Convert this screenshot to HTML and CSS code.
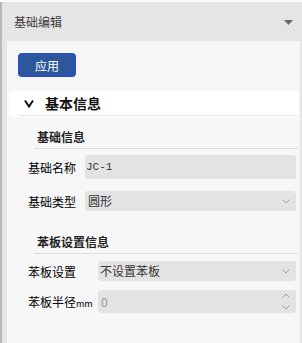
FILE: index.html
```html
<!DOCTYPE html>
<html lang="zh-CN">
<head>
    <meta charset="UTF-8">
    <meta name="viewport" content="width=device-width, initial-scale=1.0">
    <title>基础编辑</title>
    <link rel="stylesheet" href="styles.css">
</head>
<body>
    <div class="panel">
        <div class="panel-head">
            <span class="panel-title">基础编辑</span>
            <svg class="collapse" width="9" height="5" viewBox="0 0 9 5"><path d="M0 0H9L4.5 5Z" fill="#6a6a6a"/></svg>
        </div>
        <div class="panel-body">
            <button class="btn-apply">应用</button>
            <div class="sec-head">
                <div class="sec-inner">
                    <svg class="chev" width="10" height="9" viewBox="0 0 10 9"><path d="M1 1.5L5 7.5L9 1.5" fill="none" stroke="#111" stroke-width="2"/></svg>
                    <span>基本信息</span>
                </div>
            </div>

            <div class="group-title">基础信息</div>
            <div class="form-grid first">
                <label>基础名称</label>
                <div class="field tall mono">JC-1</div>
                <label>基础类型</label>
                <div class="field select">
                    <span>圆形</span>
                    <svg width="8" height="5" viewBox="0 0 8 5"><path d="M0.5 0.5L4 4L7.5 0.5" fill="none" stroke="#a0a0a0" stroke-width="1"/></svg>
                </div>
            </div>

            <div class="group-title second">苯板设置信息</div>
            <div class="form-grid second">
                <label>苯板设置</label>
                <div class="field select">
                    <span>不设置苯板</span>
                    <svg width="8" height="5" viewBox="0 0 8 5"><path d="M0.5 0.5L4 4L7.5 0.5" fill="none" stroke="#a0a0a0" stroke-width="1"/></svg>
                </div>
                <label>苯板半径<small>mm</small></label>
                <div class="field number">
                    <span>0</span>
                    <div class="spin">
                        <svg width="8" height="5" viewBox="0 0 8 5"><path d="M0.5 4.5L4 1L7.5 4.5" fill="none" stroke="#a0a0a0" stroke-width="1"/></svg>
                        <svg width="8" height="5" viewBox="0 0 8 5"><path d="M0.5 0.5L4 4L7.5 0.5" fill="none" stroke="#a0a0a0" stroke-width="1"/></svg>
                    </div>
                </div>
            </div>
        </div>
    </div>
</body>
</html>
```

FILE: styles.css
```css
body {
    margin: 0;
    font-family: "Noto Sans CJK SC", sans-serif;
    background: #fbfbfd;
}
.panel {
    margin-top: 2px;
    height: 341px;
    border-left: 2px solid #b9b9b9;
    background: #e5e5e5;
    display: flex;
    flex-direction: column;
}
.panel-head {
    height: 39px;
    display: flex;
    align-items: center;
    justify-content: space-between;
    padding: 0 9px 0 12px;
    font-size: 12px;
    color: #3c3c3c;
}
.collapse {
    margin-top: 2px;
}
.panel-body {
    flex: 1;
    margin: 0 2px 0 5px;
    background: #f7f7f7;
    padding-top: 12px;
}
.btn-apply {
    display: block;
    margin-left: 11px;
    width: 58px;
    height: 24px;
    padding: 0;
    border: 2px solid #2b50c2;
    border-radius: 4px;
    background: #2c579b;
    color: #fff;
    font-family: inherit;
    font-size: 12px;
}
.sec-head {
    margin: 14px 1px 0 2px;
    background: #fff;
    padding-bottom: 1px;
}
.sec-inner {
    height: 24px;
    margin: 0 1px 0 10px;
    border-bottom: 1px solid #e4e4e4;
    display: flex;
    align-items: center;
    font-size: 14px;
    font-weight: bold;
    color: #111;
}
.chev {
    margin: 1px 0 0 5px;
}
.sec-inner span {
    margin-left: 11px;
}
.group-title {
    margin: 12px 2px 0 27px;
    padding: 0 0 3px 3px;
    border-bottom: 1px solid #dedede;
    font-size: 12px;
    line-height: 16px;
    font-weight: bold;
    color: #222;
}
.group-title.second {
    margin-top: 23px;
}
.form-grid {
    display: grid;
    grid-template-columns: auto 1fr;
    align-items: center;
    column-gap: 9px;
    padding: 0 4px 0 21px;
    font-size: 12px;
}
.form-grid.first {
    margin-top: 6px;
    row-gap: 12px;
}
.form-grid.second {
    margin-top: 7px;
    row-gap: 9px;
    grid-template-columns: 61px 1fr;
    column-gap: 9px;
}
label {
    color: #000;
    white-space: nowrap;
}
label small {
    font-size: 9px;
}
.field {
    height: 20px;
    background: #e3e3e3;
    border-radius: 3px;
    display: flex;
    align-items: center;
    justify-content: space-between;
    padding: 0 6px 0 3px;
    color: #333;
}
.field.tall {
    height: 24px;
    padding-left: 1px;
}
.field.mono {
    font-family: "Liberation Mono", monospace;
    font-size: 11px;
}
.field.select span {
    margin-top: -1px;
}
.form-grid.second .field.select {
    padding-left: 2px;
}
.field.number {
    height: 23px;
    color: #999;
}
.spin {
    display: flex;
    flex-direction: column;
    gap: 7px;
}
```
